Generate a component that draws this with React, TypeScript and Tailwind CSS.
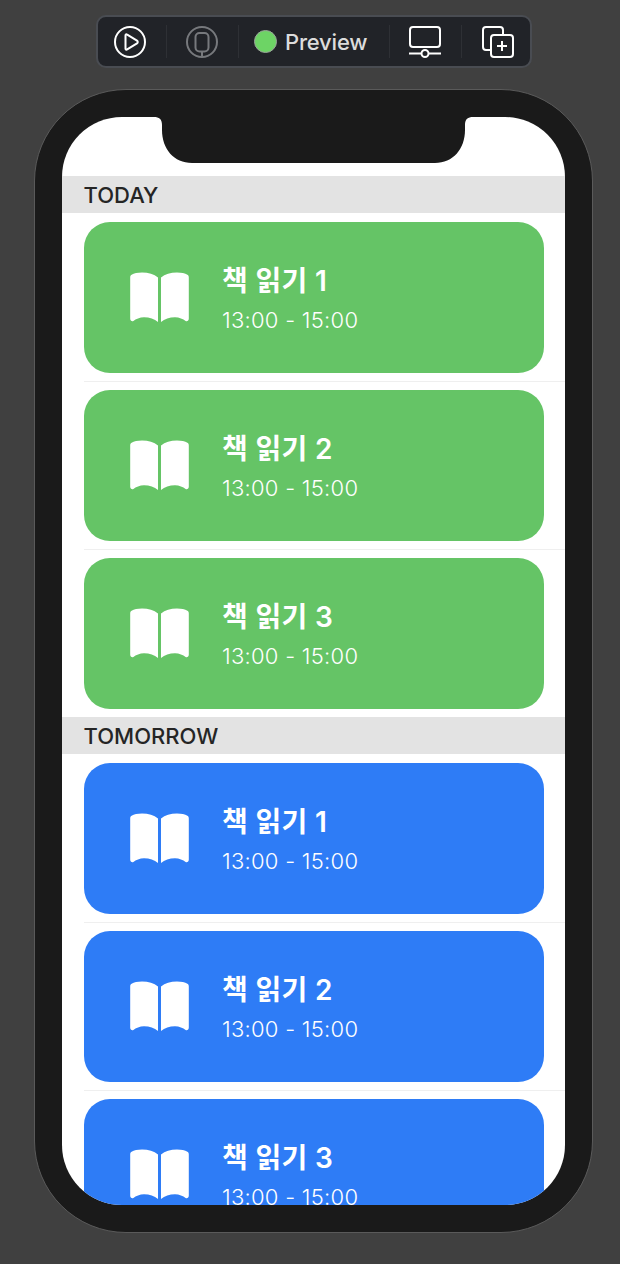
import React from "react";

const KR = "font-['Inter','Noto_Sans_CJK_KR','Noto_Sans',sans-serif]";

function Book() {
  return (
    <svg width="59" height="51" viewBox="0 0 59 51" className="shrink-0" fill="white">
      <path d="M28 5.5 C24 2.2 18.5 0.6 12 0.6 C7.5 0.6 4 1.4 1.6 2.8 C0.6 3.4 0.2 4.2 0.2 5.4 L0.2 46.5 C0.2 48.8 1.8 49.6 3.4 49 C5.8 47 9.8 45.2 14 45.2 C19.5 45.2 24.5 47.2 28 50 Z" />
      <path d="M31 5.5 C35 2.2 40.5 0.6 47 0.6 C51.5 0.6 55 1.4 57.4 2.8 C58.4 3.4 58.8 4.2 58.8 5.4 L58.8 46.5 C58.8 48.8 57.2 49.6 55.6 49 C53.2 47 49.2 45.2 45 45.2 C39.5 45.2 34.5 47.2 31 50 Z" />
    </svg>
  );
}

function Card({ n, color }: { n: number; color: string }) {
  return (
    <div className={`ml-[21.5px] mr-[21px] h-[151px] shrink-0 rounded-[26px] ${color} flex items-center pl-[46.5px] pr-4 text-white`}>
      <Book />
      <div className="ml-[33px] flex flex-col pt-[1px]">
        <div className={`${KR} text-[28px] leading-[36px] font-semibold tracking-[0.3px]`}>책 읽기 {n}</div>
        <div className={`${KR} text-[22px] leading-[28px] mt-[7px] font-light tracking-[0.27px]`}>13:00 - 15:00</div>
      </div>
    </div>
  );
}

function Divider() {
  return <div className="ml-[22px] h-[1px] my-[8px] bg-[#efefef] shrink-0" />;
}

function Header({ label }: { label: string }) {
  return (
    <div className="h-[37px] shrink-0 bg-[#e3e3e3] pl-[21.5px] pt-[2px] flex items-center text-[#252525] text-[22px] font-medium font-['Inter',sans-serif] mb-[9px]">
      {label}
    </div>
  );
}

function Section({ label, color }: { label: string; color: string }) {
  return (
    <div className="flex flex-col">
      <Header label={label} />
      <Card n={1} color={color} />
      <Divider />
      <Card n={2} color={color} />
      <Divider />
      <Card n={3} color={color} />
    </div>
  );
}

function Sep() {
  return <div className="w-[1px] h-[33px] bg-[#2e3035] shrink-0" />;
}

export default function App() {
  return (
    <div className="w-[620px] h-[1264px] bg-[#404040] overflow-hidden relative">
      {/* toolbar */}
      <div className="pt-[15px] pl-[96px]">
        <div className="h-[53px] w-[436px] rounded-[10px] bg-[#212328] border-[2px] border-[#494c52] flex items-center">
          <div className="w-[68px] flex pl-[16px] shrink-0">
            <svg width="32" height="32" viewBox="0 0 32 32" fill="none" stroke="white" strokeWidth="2">
              <circle cx="16" cy="16" r="15" />
              <path d="M11.5 9.5 C11.5 8.5 12.3 8 13.2 8.6 L23 14.6 C24 15.3 24 16.7 23 17.4 L13.2 23.4 C12.3 24 11.5 23.5 11.5 22.5 Z" strokeLinejoin="round" />
            </svg>
          </div>
          <Sep />
          <div className="w-[71px] flex pl-[19px] shrink-0">
            <svg width="32" height="32" viewBox="0 0 32 32" fill="none" stroke="#77797d" strokeWidth="2">
              <circle cx="16" cy="16" r="15" />
              <rect x="9.5" y="7" width="13" height="18.5" rx="4" />
              <path d="M16 25.5 V31" />
            </svg>
          </div>
          <Sep />
          <div className="w-[150px] flex items-center pl-[15px] shrink-0">
            <div className="w-[23px] h-[23px] rounded-full bg-[#6dd465] border border-[#9aa39a] shrink-0" />
            <span className="ml-[8px] pt-[2px] text-[22px] text-[#dcdcdc] font-medium tracking-[-0.2px] font-['Inter',sans-serif]">Preview</span>
          </div>
          <Sep />
          <div className="w-[71px] flex pl-[19px] shrink-0">
            <svg width="32" height="32" viewBox="0 0 32 32" fill="none" stroke="white" strokeWidth="2">
              <rect x="1" y="1" width="30" height="20" rx="3" />
              <path d="M0 27.5 H12 M20 27.5 H32" />
              <circle cx="16" cy="27.5" r="3.5" />
            </svg>
          </div>
          <Sep />
          <div className="w-[70px] flex pl-[20px] shrink-0">
            <svg width="32" height="32" viewBox="0 0 32 32" fill="none" stroke="white" strokeWidth="2">
              <path d="M9 24 H4 C2 24 1 23 1 21 V4 C1 2 2 1 4 1 H18 C20 1 21 2 21 4 V9" />
              <rect x="9" y="9" width="22" height="22" rx="3" />
              <path d="M20 15 V25 M15 20 H25" />
            </svg>
          </div>
        </div>
      </div>

      {/* phone body */}
      <div className="mt-[21px] ml-[34px] w-[559px] h-[1144px] rounded-[92px] bg-[#1a1a1a] border border-[#5a5a5a] pt-[27px] pl-[27px]">
        <div className="relative w-[503px] h-[1088px] bg-white rounded-[60px] overflow-hidden">
          <div className="pt-[59px] flex flex-col">
            <Section label="TODAY" color="bg-[#65c466]" />
            <div className="h-[8px] shrink-0" />
            <Section label="TOMORROW" color="bg-[#2e7cf6]" />
          </div>
          <svg className="absolute top-0 left-[92px]" width="319" height="46" viewBox="0 0 319 46" fill="#1a1a1a">
            <path d="M0 0 C5 0 8 2 8 8 L8 13 C8 32 20 46 38 46 L281 46 C299 46 311 32 311 13 L311 8 C311 2 314 0 319 0 Z" />
          </svg>
        </div>
      </div>
    </div>
  );
}
